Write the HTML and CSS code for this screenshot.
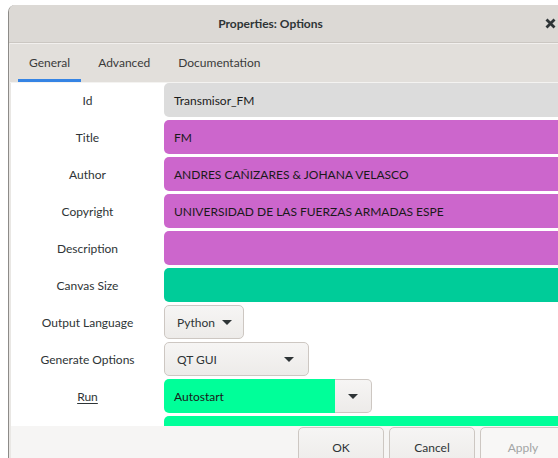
FILE: index.html
```html
<!DOCTYPE html>
<html lang="es">
<head>
<meta charset="utf-8">
<title>Properties: Options</title>
<link rel="stylesheet" href="styles.css">
</head>
<body>
<div class="window">
  <header class="titlebar">
    <span class="title">Properties: Options</span>
    <svg class="close" width="11" height="11" viewBox="0 0 11 11" aria-hidden="true">
      <path d="M1.5 1.5 L9.5 9.5 M9.5 1.5 L1.5 9.5" stroke="#2e3436" stroke-width="2.8"/>
    </svg>
  </header>
  <nav class="tabs">
    <span class="tab active">General</span>
    <span class="tab">Advanced</span>
    <span class="tab">Documentation</span>
  </nav>
  <main class="panel">
    <div class="form">
      <label class="lbl">Id</label>
      <div class="field gray">Transmisor_FM</div>

      <label class="lbl">Title</label>
      <div class="field pink">FM</div>

      <label class="lbl">Author</label>
      <div class="field pink">ANDRES CAÑIZARES &amp; JOHANA VELASCO</div>

      <label class="lbl">Copyright</label>
      <div class="field pink">UNIVERSIDAD DE LAS FUERZAS ARMADAS ESPE</div>

      <label class="lbl">Description</label>
      <div class="field pink"></div>

      <label class="lbl">Canvas Size</label>
      <div class="field teal"></div>

      <label class="lbl">Output Language</label>
      <div class="cell"><button class="drop drop-python">Python <span class="caret"></span></button></div>

      <label class="lbl">Generate Options</label>
      <div class="cell"><button class="drop drop-gen"><span>QT GUI</span><span class="caret"></span></button></div>

      <label class="lbl"><u>Run</u></label>
      <div class="cell combo">
        <span class="combo-entry">Autostart</span>
        <button class="combo-btn"><span class="caret"></span></button>
      </div>

      <label class="lbl"></label>
      <div class="field green"></div>
    </div>
  </main>
  <footer class="actions">
    <button class="btn">OK</button>
    <button class="btn">Cancel</button>
    <button class="btn disabled">Apply</button>
  </footer>
</div>
</body>
</html>
```

FILE: styles.css
```css
html, body {
  margin: 0;
  padding: 0;
  background: #ffffff;
  overflow: hidden;
  width: 558px;
  height: 458px;
}

body {
  font-family: "Lato", "Open Sans", sans-serif;
  font-size: 12px;
  color: #2e3436;
}

.window {
  margin: 5px 0 0 8px;
  width: 549px;
  height: 453px;
  border-left: 1px solid #8d8b88;
  border-top-left-radius: 7px;
  background: #e9e7e4;
  display: flex;
  flex-direction: column;
  overflow: hidden;
}

/* title bar */
.titlebar {
  position: relative;
  height: 37px;
  flex: none;
  background: #dcd9d5;
  border-bottom: 1px solid #cbc7c2;
  display: flex;
  align-items: center;
  justify-content: center;
}

.title {
  font-weight: 700;
  font-size: 12px;
  color: #2e3436;
  margin-left: -26px;
  margin-top: -1px;
}

.close {
  position: absolute;
  left: 536px;
  top: 13px;
}

/* notebook tabs */
.tabs {
  height: 38px;
  flex: none;
  margin-left: 1px;
  background: #e2dfdb;
  border-top: 1px solid #f2f0ee;
  border-bottom: 1px solid #f4f3f1;
  display: flex;
  align-items: stretch;
  padding-left: 8px;
  gap: 6px;
}

.tab {
  display: flex;
  align-items: center;
  padding: 1px 11px 0;
  color: #3a3a3a;
  border-bottom: 3px solid transparent;
}

.tab.active {
  border-bottom-color: #3584e4;
}

/* properties form */
.panel {
  flex: none;
  height: 343px;
  margin-left: 2px;
  background: #ffffff;
  overflow: hidden;
}

.form {
  display: grid;
  grid-template-columns: 153px 1fr;
  grid-auto-rows: 34px;
  row-gap: 3px;
  padding-top: 0;
}

.lbl {
  display: flex;
  align-items: center;
  justify-content: center;
  color: #2e3436;
}

.lbl u {
  text-decoration-thickness: 1px;
  text-underline-offset: 2px;
}

.field {
  border-radius: 5px 0 0 5px;
  display: flex;
  align-items: center;
  padding-left: 10px;
  color: #1a1a1a;
}

.gray { background: #dcdcdc; }
.pink { background: #cc66cc; }
.teal { background: #00cc99; }
.green { background: #00ff99; }

.cell {
  display: flex;
  align-items: stretch;
}

.drop {
  font: inherit;
  color: #2e3436;
  background: linear-gradient(#f6f5f4, #edebe9);
  border: 1px solid #cdc7c2;
  border-radius: 5px;
  display: flex;
  align-items: center;
  padding: 0 12px;
  margin: 0;
}

.drop-python {
  width: 80px;
  gap: 7px;
}

.drop-gen {
  width: 145px;
  justify-content: space-between;
  padding-right: 14px;
}

.caret {
  width: 0;
  height: 0;
  border-left: 5px solid transparent;
  border-right: 5px solid transparent;
  border-top: 5px solid #2e3436;
  display: inline-block;
}

.combo-entry {
  width: 171px;
  background: #00ff99;
  border-radius: 5px 0 0 5px;
  display: flex;
  align-items: center;
  padding-left: 10px;
  box-sizing: border-box;
  color: #1a1a1a;
}

.combo-btn {
  width: 37px;
  margin: 0;
  padding: 0;
  background: linear-gradient(#f6f5f4, #edebe9);
  border: 1px solid #cdc7c2;
  border-left: none;
  border-radius: 0 5px 5px 0;
  display: flex;
  align-items: center;
  justify-content: center;
}

/* dialog action buttons */
.actions {
  flex: none;
  height: 33px;
  margin-left: 2px;
  background: #f6f5f4;
  display: flex;
  align-items: flex-start;
  padding-left: 287px;
  gap: 5px;
  overflow: hidden;
}

.btn {
  font: inherit;
  color: #2e3436;
  flex: none;
  width: 86px;
  height: 40px;
  margin: 1px 0 0;
  background: linear-gradient(#f6f5f4, #edebe9);
  border: 1px solid #cdc7c2;
  border-radius: 5px;
}

.btn.disabled {
  color: #a3a5a5;
  background: #f8f7f6;
}
```
